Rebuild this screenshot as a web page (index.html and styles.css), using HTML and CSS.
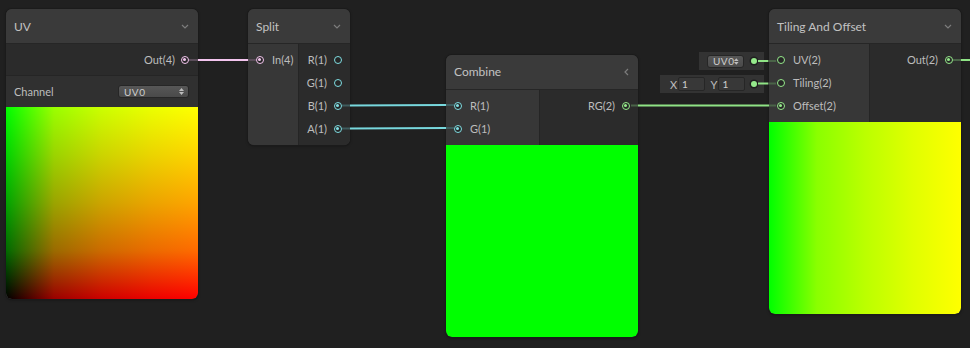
FILE: index.html
```html
<!doctype html>
<html lang="en">
<head>
    <meta charset="UTF-8">
    <title>Shader Graph</title>
    <link rel="stylesheet" href="styles.css">
</head>
<body>
    <div class="graph">

        <!-- UV -->
        <div class="node n-uv">
            <div class="title">
                <span>UV</span>
                <svg class="chev" width="8" height="5" viewBox="0 0 8 5"><polyline points="1,1 4,4 7,1" /></svg>
            </div>
            <div class="ports">
                <div class="outputs full">
                    <div class="row out">Out(4) <span class="port pink on"></span></div>
                </div>
            </div>
            <div class="control">
                <span>Channel</span>
                <div class="dropdown wide">UV0
                    <svg width="5" height="7" viewBox="0 0 5 7"><polygon points="2.5,0 5,3 0,3" /><polygon points="0,4 5,4 2.5,7" /></svg>
                </div>
            </div>
            <div class="preview uv-preview"></div>
        </div>

        <!-- Split -->
        <div class="node n-split">
            <div class="title">
                <span>Split</span>
                <svg class="chev" width="8" height="5" viewBox="0 0 8 5"><polyline points="1,1 4,4 7,1" /></svg>
            </div>
            <div class="ports">
                <div class="inputs">
                    <div class="row in"><span class="port pink on"></span> In(4)</div>
                </div>
                <div class="outputs">
                    <div class="row out">R(1) <span class="port cyan"></span></div>
                    <div class="row out">G(1) <span class="port cyan"></span></div>
                    <div class="row out">B(1) <span class="port cyan on"></span></div>
                    <div class="row out">A(1) <span class="port cyan on"></span></div>
                </div>
            </div>
        </div>

        <!-- Combine -->
        <div class="node n-combine">
            <div class="title">
                <span>Combine</span>
                <svg class="chev" width="5" height="8" viewBox="0 0 5 8"><polyline points="4,1 1,4 4,7" /></svg>
            </div>
            <div class="ports">
                <div class="inputs">
                    <div class="row in"><span class="port cyan on"></span> R(1)</div>
                    <div class="row in"><span class="port cyan on"></span> G(1)</div>
                </div>
                <div class="outputs">
                    <div class="row out">RG(2) <span class="port green on"></span></div>
                </div>
            </div>
            <div class="preview solid-green"></div>
        </div>

        <!-- Tiling And Offset -->
        <div class="node n-tiling">
            <div class="title">
                <span>Tiling And Offset</span>
                <svg class="chev" width="8" height="5" viewBox="0 0 8 5"><polyline points="1,1 4,4 7,1" /></svg>
            </div>
            <div class="ports">
                <div class="inputs">
                    <div class="row in"><span class="port green"></span> UV(2)</div>
                    <div class="row in"><span class="port green"></span> Tiling(2)</div>
                    <div class="row in"><span class="port green on"></span> Offset(2)</div>
                </div>
                <div class="outputs">
                    <div class="row out">Out(2) <span class="port green on"></span></div>
                </div>
            </div>
            <div class="preview tiling-preview"></div>
        </div>

        <!-- inline default values -->
        <div class="inline i-uv">
            <div class="dropdown small">UV0
                <svg width="5" height="7" viewBox="0 0 5 7"><polygon points="2.5,0 5,3 0,3" /><polygon points="0,4 5,4 2.5,7" /></svg>
            </div>
            <span class="dot"></span>
        </div>
        <div class="inline i-tiling">
            <span class="axis">X</span><span class="field">1</span>
            <span class="axis">Y</span><span class="field">1</span>
            <span class="dot"></span>
        </div>

        <svg class="edges" width="970" height="348">
            <!-- UV -> Split -->
            <line class="stub-pink" x1="189" y1="60" x2="198" y2="60" />
            <line class="pink" x1="198" y1="60" x2="248" y2="60" />
            <line class="stub-pink" x1="248" y1="60" x2="256" y2="60" />
            <!-- Split B -> Combine R -->
            <line class="stub-cyan" x1="342" y1="105.5" x2="350" y2="105.5" />
            <line class="cyan" x1="350" y1="105.5" x2="446" y2="105" />
            <line class="stub-cyan" x1="446" y1="105" x2="454" y2="105" />
            <!-- Split A -> Combine G -->
            <line class="stub-cyan" x1="342" y1="128.5" x2="350" y2="128.5" />
            <line class="cyan" x1="350" y1="128.5" x2="446" y2="128" />
            <line class="stub-cyan" x1="446" y1="128" x2="454" y2="128" />
            <!-- Combine -> Tiling Offset -->
            <line class="stub-green" x1="631" y1="105.5" x2="638" y2="105.5" />
            <line class="green" x1="638" y1="105.5" x2="769" y2="105.5" />
            <line class="stub-green" x1="769" y1="105.5" x2="776" y2="105.5" />
            <!-- inline values -->
            <line class="green" x1="758" y1="61" x2="768" y2="61" />
            <line class="stub-green" x1="768" y1="61" x2="776" y2="61" />
            <line class="green" x1="758" y1="83.5" x2="768" y2="83.5" />
            <line class="stub-green" x1="768" y1="83.5" x2="776" y2="83.5" />
            <!-- Tiling out -->
            <line class="stub-green" x1="953" y1="60" x2="961" y2="60" />
            <line class="green" x1="961" y1="60" x2="970" y2="60" />
        </svg>
    </div>
</body>
</html>
```

FILE: styles.css
```css
body {
    margin: 0;
    background: #202020;
    font-family: Lato, "Open Sans", sans-serif;
    font-size: 11px;
    color: #bdbdbd;
    overflow: hidden;
}

.graph {
    position: relative;
    width: 970px;
    height: 348px;
    background: #202020;
}

/* nodes sit on the canvas at their graph position */
.node {
    position: absolute;
    background: #393939;
    border-radius: 6px;
    box-shadow: 0 0 0 1px #1b1b1b, 0 1px 3px rgba(0,0,0,0.4);
    overflow: hidden;
}

.n-uv { left: 6px; top: 9px; width: 192px; }
.n-split { left: 248px; top: 9px; width: 102px; }
.n-combine { left: 446px; top: 55px; width: 192px; }
.n-tiling { left: 769px; top: 9px; width: 192px; }

.title {
    height: 35px;
    box-sizing: border-box;
    border-bottom: 1px solid #262626;
    display: flex;
    align-items: center;
    justify-content: space-between;
    padding: 0 9px 0 8px;
    font-size: 12px;
    color: #c2c2c2;
    background: #3a3a3a;
}

.n-combine .title span { margin-top: -2px; }

.chev polyline {
    fill: none;
    stroke: #7c7c7c;
    stroke-width: 1.2;
}

.ports {
    display: flex;
}

.inputs {
    background: #373737;
    padding: 4px 0 5px;
    border-right: 1px solid #252525;
}

.n-split .inputs { width: 50px; }
.n-combine .inputs { width: 93px; }
.n-tiling .inputs { width: 100px; }

.outputs {
    flex: 1;
    background: #2b2b2b;
    padding: 4px 0 5px;
}

.outputs.full {
    padding: 4px 0 4px;
}

.row {
    height: 23px;
    display: flex;
    align-items: center;
}

.row.in {
    padding-left: 8px;
    gap: 8px;
}

.row.out {
    justify-content: flex-end;
    padding-right: 8px;
    gap: 7px;
}

.n-uv .row.out { padding-right: 9px; gap: 6px; }

.port {
    position: relative;
    width: 8px;
    height: 8px;
    box-sizing: border-box;
    border: 1.5px solid currentColor;
    border-radius: 50%;
    background: #262626;
    flex: none;
}

.port.on::after {
    content: "";
    position: absolute;
    left: 1px;
    top: 1px;
    width: 3px;
    height: 3px;
    border-radius: 50%;
    background: currentColor;
}

.pink { color: #f3c4ee; }
.cyan { color: #7fdde2; }
.green { color: #95e98b; }

.control {
    height: 32px;
    box-sizing: border-box;
    border-top: 1px solid #252525;
    background: #303030;
    display: flex;
    align-items: center;
    justify-content: space-between;
    padding: 0 9px 0 8px;
}

.dropdown {
    height: 13px;
    box-sizing: border-box;
    border: 1px solid #262626;
    border-radius: 3px;
    background: linear-gradient(#575757, #4a4a4a);
    font-size: 10px;
    letter-spacing: 0.5px;
    color: #cdcdcd;
    display: flex;
    align-items: center;
    justify-content: space-between;
    padding: 0 4px 0 5px;
    line-height: 1;
}

.dropdown polygon { fill: #bdbdbd; }

.dropdown.wide { width: 71px; }
.dropdown.small { width: 37px; }

.preview {
    height: 192px;
    border-radius: 0 0 6px 6px;
}

.uv-preview {
    background:
        linear-gradient(to right, #000 0%, #9a0000 25%, #cc0000 50%, #ea0000 75%, #ff0000 100%),
        linear-gradient(to bottom, #00ff00 0%, #00d400 25%, #00a400 50%, #006a00 75%, #000 100%);
    background-blend-mode: screen;
}

.solid-green { background: #00ff00; }

.tiling-preview {
    background: linear-gradient(to right, #00ff00 0%, #8aff00 25%, #bbff00 50%, #e1ff00 75%, #ffff00 100%);
}

/* default value boxes hanging off unconnected inputs */
.inline {
    position: absolute;
    height: 18px;
    background: #333333;
    display: flex;
    align-items: center;
    box-sizing: border-box;
}

.i-uv {
    left: 699px;
    top: 52px;
    width: 65px;
    padding-left: 8px;
}

.i-tiling {
    left: 660px;
    top: 75px;
    width: 104px;
    padding-left: 10px;
}

.inline .dot {
    width: 6px;
    height: 6px;
    border-radius: 50%;
    background: #95e98b;
    box-shadow: 0 0 0 1.5px #1f1f1f;
    margin-left: auto;
    margin-right: 7px;
}

.axis {
    font-size: 11px;
    color: #bdbdbd;
    width: 8px;
}

.field {
    width: 27px;
    height: 14px;
    box-sizing: border-box;
    background: #383838;
    border: 1px solid #262626;
    border-radius: 2px;
    font-size: 10px;
    line-height: 12px;
    padding-left: 3px;
    color: #cdcdcd;
    margin: 0 6px 0 0;
}

.edges {
    position: absolute;
    left: 0;
    top: 0;
    pointer-events: none;
}

.edges line { stroke-width: 2; }
.edges .pink { stroke: #f3c4ee; }
.edges .cyan { stroke: #78d8dd; }
.edges .green { stroke: #8fe385; }
.edges .stub-pink { stroke: #5a4d59; }
.edges .stub-cyan { stroke: #3e5c5e; }
.edges .stub-green { stroke: #4a6448; }
```
